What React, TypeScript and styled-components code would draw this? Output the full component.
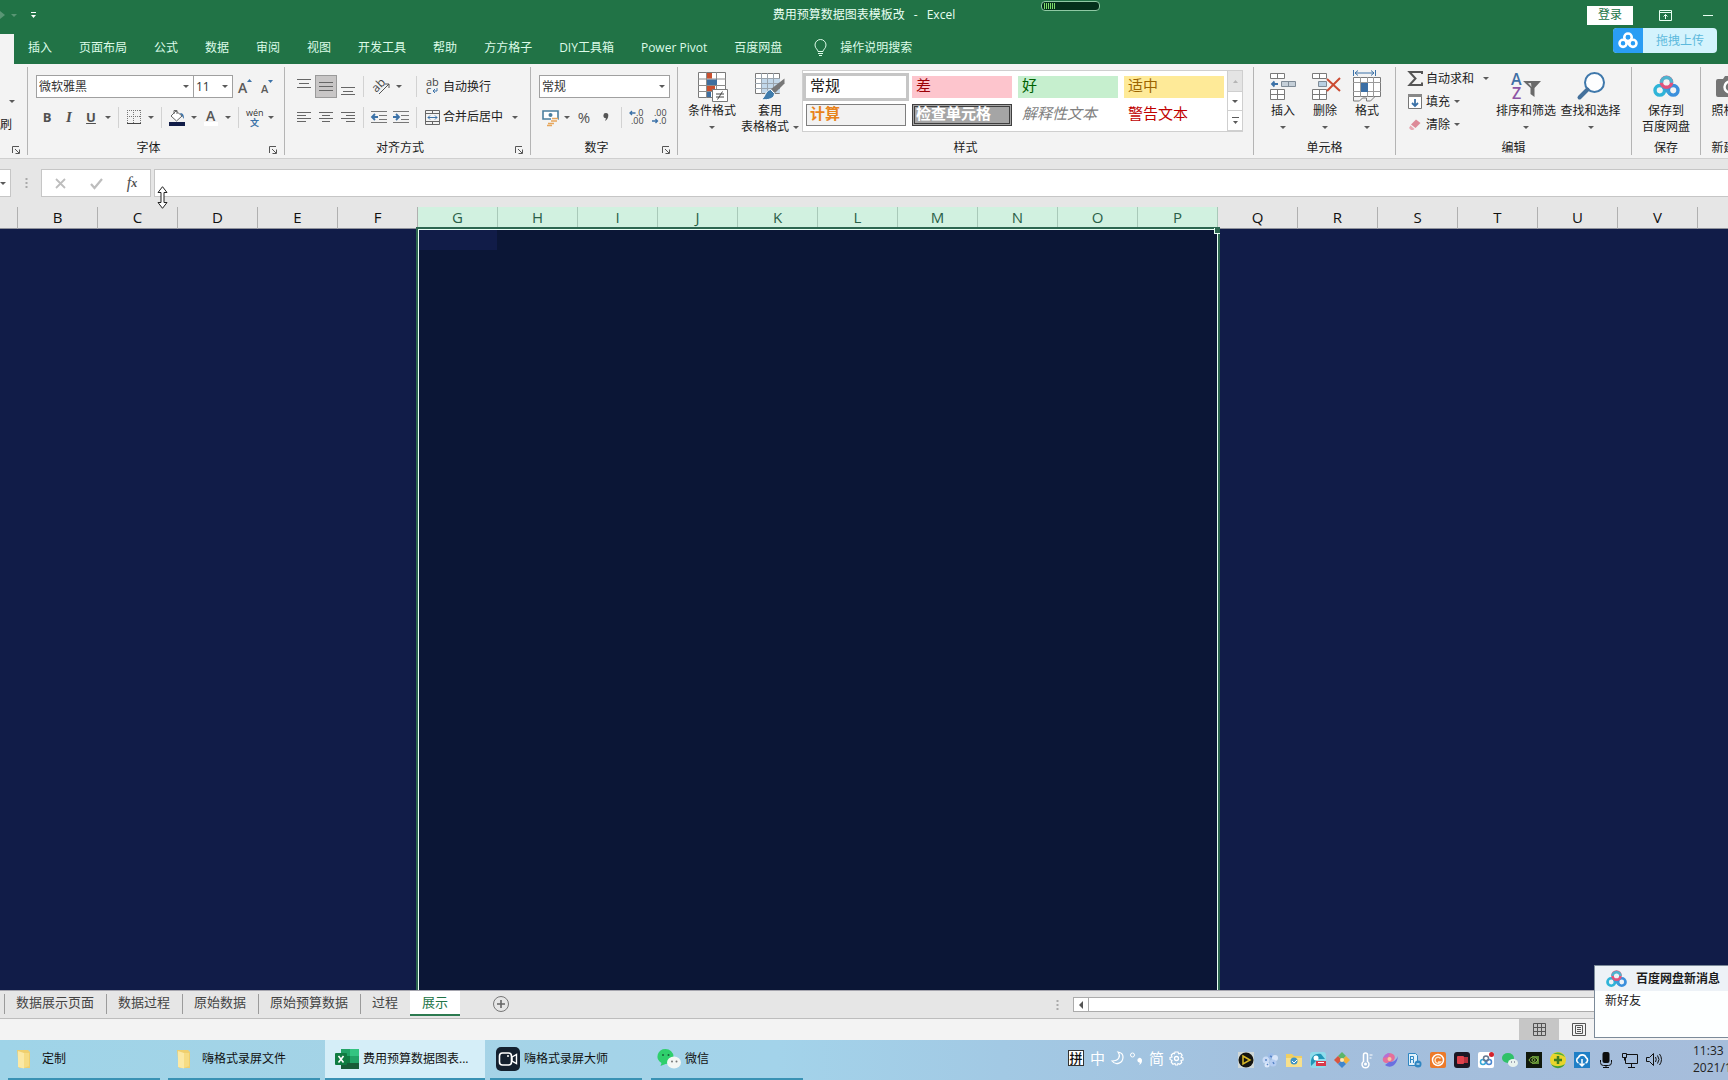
import React from "react";
import styled, { createGlobalStyle, css } from "styled-components";

const Global = createGlobalStyle`
  * { box-sizing: border-box; }
  html, body, #root { height: 100%; }
  body { margin: 0; overflow: hidden; background: #e6e6e6; }
  body, button, input, select, table {
    font-family: "Open Sans", "Noto Sans CJK SC", sans-serif;
    font-size: 12px;
    line-height: 16px;
    color: #1c1c1c;
  }
  button { border: 0; padding: 0; background: none; white-space: nowrap; }
  svg { display: block; flex: none; overflow: visible; }
`;

const Window = styled.div`
  height: 100vh;
  display: flex;
  flex-direction: column;
  overflow: hidden;
  position: relative;
`;

/* ---------- title bar ---------- */

const TitleBar = styled.header`
  flex: none;
  height: 34px;
  background: #217346;
  display: grid;
  grid-template-columns: 1fr auto 1fr;
  padding-bottom: 4px;
`;
const QuickAccess = styled.div`
  display: flex;
  align-items: center;
  gap: 6px;
`;
const QuickButton = styled.button<{ $dim?: boolean }>`
  display: flex;
  opacity: ${(p) => (p.$dim ? 0.25 : 1)};
`;
const Title = styled.h1`
  margin: 0;
  align-self: center;
  display: flex;
  gap: 9px;
  font-size: 12px;
  line-height: 16px;
  font-weight: 400;
  color: #e8fff2;
`;
const WindowButtons = styled.div`
  display: flex;
  justify-content: flex-end;
  align-items: center;
`;
const SignIn = styled.button`
  width: 46px;
  height: 19px;
  margin-right: 9px;
  background: #fff;
  color: #217346;
`;
const WindowButton = styled.button<{ $w: number }>`
  width: ${(p) => p.$w}px;
  height: 30px;
  display: flex;
  align-items: center;
  justify-content: center;
`;
const Battery = styled.div`
  position: absolute;
  top: 1px;
  left: 1041px;
  width: 59px;
  height: 10px;
  border: 1px solid #8fc9a4;
  border-radius: 4px;
  background: #04301b;
  padding: 1px 2px;
  display: flex;
  gap: 1px;
`;
const Bar = styled.i`
  width: 1px;
  background: #7ddc6a;
`;
const UploadPill = styled.button`
  position: absolute;
  top: 28px;
  right: 11px;
  width: 104px;
  height: 25px;
  display: flex;
  border-radius: 4px;
  overflow: hidden;
  background: #d3f3fd;
`;
const PillIcon = styled.span`
  width: 30px;
  height: 25px;
  background: #2a9df4;
  display: flex;
  align-items: center;
  justify-content: center;
`;
const PillText = styled.span`
  flex: 1;
  line-height: 25px;
  color: #5db9dc;
`;

/* ---------- ribbon tabs ---------- */

const Tabs = styled.nav`
  flex: none;
  height: 30px;
  background: #217346;
  display: flex;
  gap: 27px;
  overflow: hidden;
`;
const ActiveTab = styled.div`
  width: 14px;
  margin-right: -13px;
  background: #f3f3f3;
`;
const Tab = styled.button`
  flex: none;
  padding-bottom: 3px;
  color: #dcfbe8;
`;
const Search = styled.button`
  flex: none;
  display: flex;
  align-items: center;
  gap: 13px;
  padding: 0 0 3px 5px;
  color: #dcfbe8;
`;

/* ---------- ribbon ---------- */

const Ribbon = styled.section`
  flex: none;
  height: 95px;
  display: flex;
  overflow: hidden;
  background: #f3f3f3;
  border-bottom: 1px solid #cfcfcf;
`;
const GroupBox = styled.div<{ $w: number }>`
  flex: none;
  width: ${(p) => p.$w}px;
  display: flex;
  flex-direction: column;
  position: relative;
  border-right: 1px solid #b4b4b4;
  border-image: linear-gradient(#f3f3f3 4px, #b4b4b4 4px, #b4b4b4 90px, #f3f3f3 90px) 1;
`;
const GroupBody = styled.div<{ $flush?: boolean }>`
  height: 71px;
  display: flex;
  padding-left: ${(p) => (p.$flush ? 0 : 8)}px;
`;
const GroupFoot = styled.div`
  height: 23px;
  display: flex;
`;
const GroupName = styled.div`
  flex: 1;
  text-align: center;
  line-height: 25px;
  white-space: nowrap;
`;
const LauncherButton = styled.button`
  width: 15px;
  display: flex;
  align-items: center;
  padding-top: 6px;
`;
const Rows = styled.div`
  padding-top: 7px;
`;
const Row = styled.div`
  height: 31px;
  display: flex;
  align-items: center;
  & + & {
    height: 30px;
  }
`;
const Tool = styled.button<{ $w?: number; $on?: boolean }>`
  flex: none;
  width: ${(p) => p.$w ?? 22}px;
  height: 23px;
  display: flex;
  align-items: center;
  justify-content: center;
  gap: 5px;
  color: #444;
  ${(p) =>
    p.$on &&
    css`
      background: #c8c6c6;
      border: 1px solid #9a9a9a;
    `}
`;
const Glyph = styled.span<{ $b?: boolean; $i?: boolean; $u?: boolean; $s?: number }>`
  font-size: ${(p) => p.$s ?? 13}px;
  line-height: 16px;
  font-weight: ${(p) => (p.$b ? 700 : 400)};
  font-style: ${(p) => (p.$i ? "italic" : "normal")};
  font-family: ${(p) => (p.$i ? '"Liberation Serif", serif' : "inherit")};
  text-decoration: ${(p) => (p.$u ? "underline" : "none")};
  color: #505050;
`;
const Rule = styled.span`
  flex: none;
  width: 1px;
  height: 21px;
  margin: 0 4px;
  background: #d2d2d2;
`;
const Combo = styled.label<{ $w: number }>`
  flex: none;
  width: ${(p) => p.$w}px;
  height: 23px;
  display: flex;
  align-items: center;
  padding: 0 4px 0 2px;
  border: 1px solid #a0a0a0;
  background: #fff;
  & + & {
    margin-left: -1px;
  }
  select {
    flex: 1;
    min-width: 0;
    appearance: none;
    border: 0;
    padding: 0;
    background: none;
    color: #333;
  }
`;
const TextTool = styled.button<{ $gap?: number }>`
  height: 23px;
  display: flex;
  align-items: center;
  & > svg {
    margin-left: ${(p) => p.$gap ?? 0}px;
  }
`;
const IconSlot = styled.span`
  width: 22px;
  display: flex;
  justify-content: center;
`;
const BigTool = styled.button<{ $w: number }>`
  flex: none;
  width: ${(p) => p.$w}px;
  padding-top: 5px;
  display: flex;
  flex-direction: column;
  align-items: center;
`;
const BigIcon = styled.span`
  height: 34px;
  display: flex;
  align-items: center;
`;
const BigLine = styled.span`
  height: 16px;
  display: flex;
  align-items: center;
  gap: 4px;
`;
const EditList = styled.div`
  width: 90px;
  padding-top: 3px;
`;

const kinds: Record<string, ReturnType<typeof css>> = {
  normal: css`
    background: #fff;
    outline: 3px solid #c6c6c6;
  `,
  bad: css`
    background: #fdc5cd;
    color: #9c0006;
  `,
  good: css`
    background: #c6efce;
    color: #006100;
  `,
  neutral: css`
    background: #feea98;
    color: #9c6500;
  `,
  calc: css`
    background: #f2f2f2;
    border: 1px solid #7f7f7f;
    padding-left: 3px;
    line-height: 16px;
    color: #e8831c;
    font-weight: 700;
  `,
  check: css`
    background: #a5a5a5;
    border: 3px double #3f3f3f;
    padding-left: 1px;
    line-height: 12px;
    color: #fff;
    font-weight: 700;
  `,
  note: css`
    color: #7f7f7f;
    font-style: italic;
  `,
  warn: css`
    color: #c00000;
  `,
};
const Gallery = styled.div`
  margin-top: 6px;
  height: 62px;
  width: 441px;
  display: flex;
  border: 1px solid #cfcfcf;
  background: #fff;
`;
const GalleryGrid = styled.div`
  flex: 1;
  display: grid;
  grid-template-columns: repeat(4, 100px);
  grid-auto-rows: 22px;
  gap: 6px;
  padding: 5px 0 0 3px;
`;
const StyleCell = styled.button<{ $kind: string }>`
  text-align: left;
  padding: 0 0 4px 4px;
  font-size: 15px;
  line-height: 18px;
  ${(p) => kinds[p.$kind]}
`;
const GalleryScroll = styled.div`
  width: 15px;
  display: grid;
  grid-template-rows: 21px 19px 20px;
  border-left: 1px solid #cfcfcf;
`;
const ScrollButton = styled.button<{ $off?: boolean }>`
  display: flex;
  align-items: center;
  justify-content: center;
  background: ${(p) => (p.$off ? "#e4e4e4" : "#fff")};
  border-bottom: 1px solid #cfcfcf;
`;
const ClipRow = styled.div<{ $end: number }>`
  width: 27px;
  height: 23px;
  padding-right: ${(p) => p.$end}px;
  display: flex;
  justify-content: flex-end;
  align-items: center;
  white-space: nowrap;
`;
const ClipColumn = styled.div`
  padding-top: 26px;
`;

/* ---------- formula bar ---------- */

const FormulaBar = styled.section`
  flex: none;
  height: 48px;
  display: flex;
  padding: 10px 0 10px;
  background: #e6e6e6;
`;
const NameBox = styled.button`
  width: 11px;
  border: 1px solid #c6c6c6;
  border-left: 0;
  background: #fff;
  display: flex;
  align-items: center;
`;
const DotsSlot = styled.span`
  width: 30px;
  display: flex;
  align-items: center;
  justify-content: center;
`;
const FormulaTools = styled.div`
  width: 110px;
  margin-right: 3px;
  border: 1px solid #c6c6c6;
  background: #fff;
  display: flex;
`;
const FormulaButton = styled.button`
  flex: 1;
  display: flex;
  align-items: center;
  justify-content: center;
`;
const FormulaInput = styled.input`
  flex: 1;
  min-width: 0;
  border: 1px solid #c6c6c6;
  border-right: 0;
  background: #fff;
  padding: 0 6px;
`;
const ResizeCursor = styled.span`
  position: absolute;
  left: 156px;
  top: 186px;
`;

/* ---------- sheet ---------- */

const Sheet = styled.main`
  flex: 1;
  min-height: 0;
  overflow: hidden;
  background: #111c48;
`;
const Grid = styled.table`
  table-layout: fixed;
  width: 1778px;
  height: 100%;
  border-collapse: separate;
  border-spacing: 0;
`;
const ColHead = styled.th<{ $sel: boolean }>`
  height: 22px;
  padding: 0 0 2px;
  font-size: 15px;
  line-height: 18px;
  font-weight: 400;
  color: ${(p) => (p.$sel ? "#2a5f48" : "#111")};
  background: ${(p) => (p.$sel ? "#d1f1e0" : "#e6e6e6")};
  border-right: 1px solid ${(p) => (p.$sel ? "#a9c9b9" : "#b0b0b0")};
  border-bottom: 1px solid #8f929c;
`;
const Plain = styled.td`
  padding: 0;
`;
const Selected = styled.td`
  position: relative;
  padding: 0;
  vertical-align: top;
  background: #0b1636;
  border: 1px solid #e9fff4;
  border-bottom: 0;
  box-shadow: 0 0 0 2px #2c6650;
`;
const ActiveCell = styled.div`
  width: 78px;
  height: 20px;
  background: #111c48;
`;
const Handle = styled.i`
  position: absolute;
  top: -2px;
  right: -3px;
  width: 6px;
  height: 6px;
  background: #2c6650;
  border-left: 1px solid #e9fff4;
  border-bottom: 1px solid #e9fff4;
`;

/* ---------- sheet tabs and status ---------- */

const SheetBar = styled.nav`
  flex: none;
  height: 29px;
  display: flex;
  padding-left: 4px;
  background: #e6e6e6;
  border-top: 1px solid #a5a5ae;
  border-bottom: 1px solid #bdbdbd;
`;
const SheetTab = styled.button<{ $on?: boolean }>`
  flex: none;
  height: 25px;
  padding: 0 12px 4px;
  font-size: 13px;
  line-height: 18px;
  color: #444;
  background: linear-gradient(#9b9b9b, #9b9b9b) 0 3px / 1px 20px no-repeat;
  ${(p) =>
    p.$on &&
    css`
      color: #217346;
      background: #fff;
      border-bottom: 2px solid #2c7a50;
      padding-bottom: 2px;
    `}
`;
const AddSheet = styled.button`
  width: 20px;
  height: 26px;
  margin-left: 31px;
  display: flex;
  align-items: center;
  justify-content: center;
`;
const Spring = styled.span`
  flex: 1;
`;
const ScrollTrack = styled.div`
  flex: none;
  width: 38%;
  height: 15px;
  margin-top: 6px;
  border: 1px solid #ababab;
  border-right: 0;
  background: #fff;
  display: flex;
`;
const ScrollArrow = styled.button`
  width: 15px;
  border-right: 1px solid #ababab;
  display: flex;
  align-items: center;
  justify-content: center;
`;
const StatusBar = styled.footer`
  flex: none;
  height: 21px;
  display: flex;
  justify-content: flex-end;
  padding-right: 129px;
  background: #f3f3f3;
`;
const ViewButton = styled.button<{ $on?: boolean }>`
  width: 40px;
  display: flex;
  align-items: center;
  justify-content: center;
  background: ${(p) => (p.$on ? "#c6c6c6" : "transparent")};
`;

/* ---------- taskbar ---------- */

const Taskbar = styled.footer`
  flex: none;
  height: 40px;
  display: flex;
  padding-left: 8px;
  background: linear-gradient(90deg, #9fd4e8 0%, #a5d3e6 25%, #a3d3ea 45%, #a2c9e4 58%, #a3bfdd 75%, #a6bddb 100%);
`;
const Task = styled.button<{ $w: number; $gap: number; $pad: number; $on?: boolean }>`
  flex: none;
  width: ${(p) => p.$w}px;
  margin-right: ${(p) => p.$gap}px;
  padding-left: ${(p) => p.$pad}px;
  display: flex;
  align-items: center;
  gap: 4px;
  color: #111;
  border-bottom: 2px solid #3a92b4;
  background: ${(p) => (p.$on ? "#d5eef8" : "transparent")};
`;
const FolderSlot = styled.span`
  width: 22px;
`;
const Ime = styled.div`
  display: flex;
  align-items: center;
  gap: 5px;
  padding-bottom: 4px;
  margin-right: 50px;
  color: #fff;
  font-size: 15px;
`;
const ImeBadge = styled.b`
  width: 16px;
  height: 16px;
  margin-right: 1px;
  border: 1px solid #333;
  background: #fff;
  color: #111;
  font-size: 13px;
  line-height: 14px;
  text-align: center;
  font-weight: 500;
`;
const Tray = styled.div`
  display: flex;
  align-items: center;
  margin-right: 27px;
`;
const TrayButton = styled.button`
  width: 24px;
  height: 24px;
  display: flex;
  align-items: center;
  justify-content: center;
`;
const Clock = styled.div`
  flex: none;
  width: 35px;
  overflow: hidden;
  font-size: 12px;
  line-height: 17px;
  padding-top: 2px;
  white-space: nowrap;
  color: #222;
`;

const Popup = styled.aside`
  position: absolute;
  right: 0;
  bottom: 42px;
  width: 134px;
  height: 73px;
  border: 1px solid #7b8a99;
  border-right: 0;
  background: #fdffff;
`;
const PopupHead = styled.div`
  height: 25px;
  display: flex;
  align-items: center;
  gap: 9px;
  padding-left: 11px;
  background: #edf2f7;
  font-weight: 700;
  white-space: nowrap;
`;
const PopupText = styled.p`
  margin: 0;
  padding: 2px 10px;
`;

/* ---------- icons ---------- */

const Svg = ({ w, h, children, vb }: { w: number; h: number; vb?: string; children: React.ReactNode }) => (
  <svg width={w} height={h} viewBox={vb ?? `0 0 ${w} ${h}`} fill="none" aria-hidden="true">
    {children}
  </svg>
);
const Caret = ({ c = "#5a5a5a" }: { c?: string }) => (
  <Svg w={6} h={3}>
    <path d="M0 0h6L3 3z" fill={c} />
  </Svg>
);
const Lines = ({ rows }: { rows: [number, number, number][] }) => (
  <Svg w={14} h={16}>
    {rows.map(([y, a, b]) => (
      <path key={y} d={`M${a} ${y}.5H${b}`} stroke="#666" />
    ))}
  </Svg>
);
const Indent = ({ out }: { out?: boolean }) => (
  <Svg w={16} h={14}>
    <path d="M0 1.500h16M8 5.500h8M8 9.500h8M0 12.500h16" stroke="#777" />
    {out ? <path d="M7 7H1.500M4 4L1 7l3 3" stroke="#3c72a8" strokeWidth="1.800" /> : <path d="M0 7h5.500M3 4l3 3-3 3" stroke="#3c72a8" strokeWidth="1.800" />}
  </Svg>
);
const Dots = () => (
  <Svg w={3} h={12}>
    <path d="M.5 1h2v2h-2zM.5 5h2v2h-2zM.5 9h2v2h-2z" fill="#a9a9a9" />
  </Svg>
);
const GrowFont = ({ small }: { small?: boolean }) => (
  <svg width="16" height="18" viewBox="0 0 16 18" aria-hidden="true">
    <text x={small ? 3 : 2} y="15" fontSize={small ? 11 : 14} fontWeight="600" fill="#5a5a5a">A</text>
    <path d={small ? "M10 2h5l-2.500 3z" : "M11 4h5l-2.500-3z"} fill="#3c72a8" />
  </svg>
);
const Cloud = ({ s, mono }: { s: number; mono?: boolean }) => (
  <svg width={s} height={Math.round(s * 0.86)} viewBox="0 0 28 24" fill="none" aria-hidden="true">
    <circle cx="7" cy="16" r="5" stroke={mono ? "#fff" : "#2fb4d8"} strokeWidth="3.600" />
    <circle cx="21" cy="16" r="5" stroke={mono ? "#fff" : "#3b8fdc"} strokeWidth="3.600" />
    <path d="M10.500 12.500L17.500 19.500" stroke={mono ? "#fff" : "#3aa0d8"} strokeWidth="3.400" />
    <circle cx="14" cy="7.500" r="5.300" stroke={mono ? "#fff" : "#e2537c"} strokeWidth="3.600" />
    {!mono && <path d="M8.700 8a5.300 5.300 0 0 1 10.600 0" stroke="#4fb3cf" strokeWidth="3.600" />}
  </svg>
);
const Decimal = ({ more }: { more?: boolean }) => (
  <svg width="16" height="16" viewBox="0 0 16 16" fill="none" aria-hidden="true">
    <text x={more ? 7 : 3} y="7" fontSize="9" fill="#444">{more ? ".0" : ".00"}</text>
    <text x={more ? 2 : 8} y="15" fontSize="9" fill="#444">{more ? ".00" : ".0"}</text>
    {more ? <path d="M6.500 4H1M3 2L1 4l2 2" stroke="#3c72a8" strokeWidth="1.300" /> : <path d="M1 12h5.500M4.500 10l2 2-2 2" stroke="#3c72a8" strokeWidth="1.300" />}
  </svg>
);
const Launcher = () => (
  <Svg w={8} h={8}>
    <path d="M.5 7V.5H7M3 3l4 4M7.500 3.500v4h-4" stroke="#555" />
  </Svg>
);
const CondIcon = () => (
  <Svg w={31} h={31}>
    <path d="M1.500 1.500h27v25h-27z" fill="#fff" stroke="#7a7a7a" />
    <path d="M1 8h28M1 14.500h28M1 20.500h28M9.500 1v26M19.500 1v26" stroke="#8c8c8c" />
    <path d="M10 2h5v5.500h-5zM10 15h8v5h-8z" fill="#c9502f" />
    <path d="M10 8.500h10v5.500H10zM10 21h4v5h-4z" fill="#3f6f9f" />
    <path d="M15.500 18.500h15v12h-15z" fill="#fff" stroke="#7a7a7a" />
    <path d="M19 23h8M19 26h8M25.500 20.500l-5 8" stroke="#444" />
  </Svg>
);
const TableIcon = () => (
  <Svg w={30} h={30}>
    <path d="M.5 2.500h24v20H.5z" fill="#fff" stroke="#7a7a7a" />
    <path d="M7 8h18v14H7z" fill="#c2d8ea" />
    <path d="M0 7.500h25M0 12.500h25M0 17.500h25M6.500 2v21M12.500 2v21M18.500 2v21" stroke="#9aa4ad" />
    <path d="M29.500 7.500v5L20 22l-4-4z" fill="#777" />
    <path d="M15.500 18.500l4 4c0 5-6 7-13.500 6 4-1 4-9 9.500-10z" fill="#3f7cac" stroke="#fff" />
  </Svg>
);
const CellsIcon = ({ del }: { del?: boolean }) => (
  <Svg w={30} h={30}>
    <path d="M2.500 2.500h14v5h-14zM9.500 2.500v5M2.500 18.500h14v10h-14zM9.500 18.500v10M2.500 23.500h14" fill="#fff" stroke="#7a7a7a" />
    {del ? (
      <>
        <path d="M8.500 10.500h8v5h-8z" fill="#b9cfe2" stroke="#7f8b96" />
        <path d="M17 8l13 12M30 7L17 20" stroke="#cc4b32" strokeWidth="2" />
      </>
    ) : (
      <>
        <path d="M13.500 10.500h14v5h-14zM20.500 10.500v5" fill="#c5cfd8" stroke="#7f8b96" />
        <path d="M10 13H4M6.500 10.500L4 13l2.500 2.500" stroke="#3c72a8" strokeWidth="1.800" />
      </>
    )}
  </Svg>
);
const FormatIcon = () => (
  <Svg w={30} h={32}>
    <path d="M1.500 0v6M23.500 0v6M3 3h19M6 .5L3 3l3 2.500M19 .5L22 3l-3 2.500" stroke="#3c72a8" />
    <path d="M1.500 7.500h27v19h-27z" fill="#fff" stroke="#7a7a7a" />
    <path d="M1 12.500h28M1 21.500h28M8.500 7v20M15.500 7v20M21.500 7v20" stroke="#9a9a9a" />
    <path d="M9 13h7v9H9z" fill="#3c6fa5" />
    <path d="M1.500 27v4h6l3-3h4v3h4l4-4" stroke="#7a7a7a" />
  </Svg>
);
const SortIcon = () => (
  <svg width="30" height="30" viewBox="0 0 30 30" aria-hidden="true">
    <text x="0" y="14" fontSize="16" fontWeight="600" fill="#3f6fa5">A</text>
    <text x="1" y="28" fontSize="16" fontWeight="600" fill="#8d55a5">Z</text>
    <path d="M12 10h18l-6.500 7v9l-4-3v-6z" fill="#6a6a6a" />
    <path d="M20 12h-3l3.500 4z" fill="#ddd" />
  </svg>
);
const FindIcon = () => (
  <Svg w={30} h={30}>
    <circle cx="18.500" cy="11.500" r="9.500" fill="#fdfeff" stroke="#3f78ab" strokeWidth="2" />
    <path d="M11.500 18.500L3.500 26.500" stroke="#44709b" strokeWidth="4" strokeLinecap="round" />
  </Svg>
);

const trayIcons: [string, React.ReactNode][] = [
  ["播放器", <><rect width="16" height="16" fill="#cfd8d8" /><circle cx="8" cy="8" r="7.500" fill="#151510" /><path d="M5 4l7 4-7 4z" stroke="#d8b927" strokeWidth="1.500" /></>],
  ["网络", <><circle cx="4" cy="8" r="3.500" fill="#c9dbf6" /><circle cx="9" cy="4" r="3" fill="#9dbce8" /><circle cx="13" cy="6" r="3" fill="#d8e5f9" /><circle cx="11" cy="11" r="3.500" fill="#b5cdf2" /><circle cx="5" cy="13" r="2.500" fill="#dce8fa" /><path d="M3 8h2M8 4l2 1M11 10l1 2M5 12l1 1" stroke="#5a86c8" strokeWidth="1.500" /></>],
  ["文件夹", <><path d="M0 2h6l2 2h8v11H0z" fill="#f0cf62" /><path d="M0 6h16v9H0z" fill="#f8e08c" /><circle cx="8" cy="9" r="3.500" fill="#3d93c6" /><path d="M6 9l2 2 3-3" stroke="#fff" /></>],
  ["助手", <><rect width="16" height="16" rx="3" fill="#8fdcec" /><path d="M1 14C0 5 4 1 11 2l4 5H8z" fill="#2196b8" /><circle cx="6" cy="6" r="2.500" fill="#fff" /><path d="M6 9h10v5H6z" fill="#d83a4a" /><path d="M8 10.500h6" stroke="#fff" /></>],
  ["安全", <><path d="M8 0l4 4-4 4-4-4z" fill="#5bb56a" /><path d="M12 4l4 4-4 4-4-4z" fill="#f0b03a" /><path d="M4 4l4 4-4 4-4-4z" fill="#d9553f" /><path d="M8 8l4 4-4 4-4-4z" fill="#3f86cf" /><circle cx="8" cy="8" r="2" fill="#ffe9b0" /></>],
  ["温度", <><path d="M5.500 9.500V3a2 2 0 0 1 4 0v6.500a3.500 3.500 0 1 1-4 0z" stroke="#fff" strokeWidth="1.500" /><circle cx="7.500" cy="12" r="1.500" fill="#fff" /><path d="M11.500 3h3M11.500 6h2" stroke="#fff" /></>],
  ["浏览器", <><path d="M1 6c2-5 8-6 11-3 2 3 0 6-3 7l-4 1C2 11 0 9 1 6z" fill="#e56f9a" /><path d="M3 13c5 4 12 1 13-9-2 5-5 6-9 6z" fill="#6a6fe0" /><path d="M1 6c1-3 4-5 7-5L6 5z" fill="#b46fd6" /><circle cx="7.500" cy="7" r="2" fill="#f6c9a0" /></>],
  ["蓝牙", <><path d="M2.500 1.500h7l2 2v10h-9z" fill="#dff0fb" stroke="#2f86c2" /><path d="M4.500 4v7M4.500 4.500h3v3h-3M7.500 8v3" stroke="#2f86c2" /><circle cx="12" cy="12" r="3.500" fill="#2f86c2" /><path d="M10.500 12h3" stroke="#fff" /></>],
  ["火绒", <><rect width="16" height="16" rx="2" fill="#ec7a2a" /><circle cx="8" cy="8" r="5.500" stroke="#fff" strokeWidth="1.500" /><path d="M10.500 6.500a3 3 0 1 0 0 3.500H8" stroke="#ffe2c0" strokeWidth="1.500" /></>],
  ["录屏", <><rect width="16" height="16" rx="3" fill="#1b1724" /><rect x="3" y="4" width="7" height="8" rx="1" fill="#e0414c" /><path d="M10 5h4v6h-4z" fill="#b9303d" /></>],
  ["百度网盘", <><rect width="16" height="16" rx="2" fill="#fff" /><circle cx="5" cy="10" r="2.500" stroke="#35a7d8" strokeWidth="1.500" /><circle cx="11" cy="10" r="2.500" stroke="#4a86d0" strokeWidth="1.500" /><circle cx="8" cy="6.500" r="2.500" stroke="#64768e" strokeWidth="1.500" /><circle cx="13.500" cy="2.500" r="2.500" fill="#d3222c" /></>],
  ["微信", <><ellipse cx="6" cy="6" rx="6" ry="5" fill="#2fc168" /><ellipse cx="11" cy="11" rx="5" ry="4" fill="#e9f3ee" /><path d="M9 10h1M12 10h1" stroke="#557" /></>],
  ["NVIDIA", <><rect width="16" height="16" fill="#10180c" /><path d="M6 4h7v8H6z" fill="#5d8a33" /><path d="M3 8c2-4 6-4 9 0-3 4-7 4-9 0z" fill="#10180c" stroke="#8cc04a" /><circle cx="7.500" cy="8" r="1.500" stroke="#8cc04a" /></>],
  ["安全卫士", <><circle cx="8" cy="8" r="8" fill="#e8d52c" /><path d="M1 12A8 8 0 0 0 15 12C10 15 5 15 1 12z" fill="#3f9c3c" /><path d="M3 2a8 8 0 0 1 12 3C11 2 7 2 3 2z" fill="#4fae3f" /><path d="M8 4v8M4 8h8" stroke="#3c7d22" strokeWidth="2.500" /></>],
  ["云同步", <><rect width="16" height="16" fill="#1f7fc6" /><path d="M4.500 11a3 3 0 0 1 0-5.500 4 4 0 0 1 7.500 0 3 3 0 0 1-.5 5.500" stroke="#fff" strokeWidth="1.600" /><path d="M8 7v7M5.500 11.500L8 14l2.500-2.500" stroke="#fff" strokeWidth="1.500" /></>],
  ["麦克风", <><rect x="4.500" y="0" width="7" height="11" rx="2" fill="#0d0d0d" /><path d="M2.500 8v2.500a3 3 0 0 0 3 3h5a3 3 0 0 0 3-3V8M8 13v3M5 15.500h6" stroke="#0d0d0d" /></>],
  ["网络连接", <><path d="M4.500 2.500h11v9h-12V6M9.500 12v3M6 15.500h7M.5 1.500h4v4h-4zM2.500 6v2.500" stroke="#111" /></>],
  ["音量", <><path d="M.5 5.500h3l4-4v12l-4-4h-3z" stroke="#111" /><path d="M9.500 5q1.500 2.500 0 5M11.500 3.500q3 4 0 8M13.500 2q4 5.500 0 11" stroke="#111" /></>],
];

/* ---------- parts ---------- */

const Group = ({ w, name, launcher, flush, children }: { w: number; name: string; launcher?: boolean; flush?: boolean; children: React.ReactNode }) => (
  <GroupBox $w={w}>
    <GroupBody $flush={flush}>{children}</GroupBody>
    <GroupFoot>
      <GroupName>{name}</GroupName>
      {launcher && (
        <LauncherButton aria-label={`${name}设置`}>
          <Launcher />
        </LauncherButton>
      )}
    </GroupFoot>
  </GroupBox>
);

const Drop = () => (
  <Tool $w={12} aria-label="更多">
    <Caret />
  </Tool>
);

const Big = ({ w, icon, label, second, caret }: { w: number; icon: React.ReactNode; label: string; second?: string; caret?: boolean }) => (
  <BigTool $w={w}>
    <BigIcon>{icon}</BigIcon>
    <BigLine>{label}</BigLine>
    <BigLine>
      {second}
      {caret && <Caret />}
    </BigLine>
  </BigTool>
);

const tabs = ["插入", "页面布局", "公式", "数据", "审阅", "视图", "开发工具", "帮助", "方方格子", "DIY工具箱", "Power Pivot", "百度网盘"];
const styleCells: [string, string][] = [
  ["常规", "normal"],
  ["差", "bad"],
  ["好", "good"],
  ["适中", "neutral"],
  ["计算", "calc"],
  ["检查单元格", "check"],
  ["解释性文本", "note"],
  ["警告文本", "warn"],
];
const columns = "BCDEFGHIJKLMNOPQRSTUVW".split("");
const sheets = ["数据展示页面", "数据过程", "原始数据", "原始预算数据", "过程", "展示"];

const Folder = () => (
  <FolderSlot>
    <Svg w={16} h={20}>
      <path d="M1 1h11l2 2v16H3z" fill="#efcf6e" />
      <path d="M2 2l6 2v15.500L2 18z" fill="#fbe9a5" />
      <path d="M8 4h5v13l-5 2z" fill="#f6dc84" />
    </Svg>
  </FolderSlot>
);

export default function App() {
  return (
    <Window>
      <Global />
      <TitleBar>
        <QuickAccess>
          <QuickButton $dim aria-label="恢复">
            <Svg w={5} h={10}>
              <path d="M0 1l5 4-5 4z" fill="#fff" />
            </Svg>
          </QuickButton>
          <QuickButton $dim aria-label="恢复选项">
            <Caret c="#fff" />
          </QuickButton>
          <QuickButton aria-label="自定义快速访问工具栏">
            <Svg w={20} h={8}>
              <path d="M8 1.500h5" stroke="#fff" />
              <path d="M8 4h5l-2.500 3z" fill="#fff" />
            </Svg>
          </QuickButton>
        </QuickAccess>
        <Title>
          <span>费用预算数据图表模板改</span>
          <span>-</span>
          <span>Excel</span>
        </Title>
        <WindowButtons>
          <SignIn>登录</SignIn>
          <WindowButton $w={46} aria-label="功能区显示选项">
            <Svg w={13} h={11}>
              <path d="M.5.5h12v10H.5zM.5 2.500h12M6.500 9V4.500M4.500 6.500l2-2 2 2" stroke="#e8fff2" />
            </Svg>
          </WindowButton>
          <WindowButton $w={40} aria-label="最小化">
            <Svg w={10} h={1}>
              <path d="M0 .5h10" stroke="#e8fff2" />
            </Svg>
          </WindowButton>
        </WindowButtons>
      </TitleBar>
      <Tabs>
        <ActiveTab />
        {tabs.map((t) => (
          <Tab key={t}>{t}</Tab>
        ))}
        <Search>
          <Svg w={13} h={17}>
            <path d="M4 12.500c0-2-3-3-3-6.500a5.500 5.500 0 0 1 11 0c0 3.500-3 4.500-3 6.500zM4 14.500h5M5 16.500h3" stroke="#dcfbe8" />
          </Svg>
          操作说明搜索
        </Search>
      </Tabs>

      <Ribbon>
        <Group w={28} name="" launcher flush>
          <ClipColumn>
            <ClipRow $end={12}>
              <Caret />
            </ClipRow>
            <ClipRow $end={15}>格式刷</ClipRow>
          </ClipColumn>
        </Group>

        <Group w={257} name="字体" launcher>
          <Rows>
            <Row>
              <Combo $w={158}>
                <select aria-label="字体">
                  <option>微软雅黑</option>
                </select>
                <Caret />
              </Combo>
              <Combo $w={40}>
                <select aria-label="字号">
                  <option>11</option>
                </select>
                <Caret />
              </Combo>
              <Tool aria-label="增大字号"><GrowFont /></Tool>
              <Tool aria-label="减小字号"><GrowFont small /></Tool>
            </Row>
            <Row>
              <Tool><Glyph $b>B</Glyph></Tool>
              <Tool><Glyph $b $i $s={15}>I</Glyph></Tool>
              <Tool><Glyph $b $u>U</Glyph></Tool>
              <Drop />
              <Rule />
              <Tool aria-label="边框">
                <Svg w={14} h={14}>
                  <path d="M0 .5h14M.5 0v13M13.500 0v13M6.500 0v13M0 6.500h14" stroke="#777" strokeDasharray="1 1" />
                  <path d="M0 13.500h14" stroke="#444" />
                </Svg>
              </Tool>
              <Drop />
              <Rule />
              <Tool aria-label="填充颜色">
                <Svg w={16} h={17}>
                  <path d="M7 2l6 5-5.500 5L2 7z" fill="#fff" stroke="#666" />
                  <path d="M5 5V1.500h3V5" stroke="#666" />
                  <path d="M11 4c3 0 4 2 4 6l-2-3z" fill="#3c72a8" />
                  <path d="M0 13h16v4H0z" fill="#111c48" />
                </Svg>
              </Tool>
              <Drop />
              <Tool aria-label="字体颜色">
                <Svg w={14} h={17}>
                  <path d="M0 13h14v4H0z" fill="#fff" />
                  <text x="2" y="12" fontSize="14" fontWeight="600" fill="#555">A</text>
                </Svg>
              </Tool>
              <Drop />
              <Rule />
              <Tool aria-label="拼音">
                <Svg w={18} h={19}>
                  <text x="1" y="8" fontSize="9" fill="#333">wén</text>
                  <text x="5" y="18" fontSize="9" fontWeight="700" fill="#3c72a8">文</text>
                </Svg>
              </Tool>
              <Drop />
            </Row>
          </Rows>
        </Group>

        <Group w={246} name="对齐方式" launcher>
          <Rows>
            <Row>
              <Tool aria-label="顶端对齐"><Lines rows={[[0, 0, 14], [4, 2, 12], [8, 0, 14]]} /></Tool>
              <Tool $on aria-label="垂直居中"><Lines rows={[[3, 0, 14], [7, 0, 14], [11, 0, 14]]} /></Tool>
              <Tool aria-label="底端对齐"><Lines rows={[[8, 0, 14], [12, 2, 12], [15, 0, 14]]} /></Tool>
              <Rule />
              <Tool $w={44} aria-label="方向">
                <Svg w={17} h={17}>
                  <text x="-2" y="11" fontSize="12" fill="#444" transform="rotate(-45 5 8)">ab</text>
                  <path d="M5 16L15 6M15 10V6h-4" stroke="#555" />
                </Svg>
                <Caret />
                <span />
              </Tool>
              <Rule />
              <TextTool>
                <IconSlot>
                  <Svg w={14} h={17}>
                    <text x="1" y="8" fontSize="11" fill="#444">ab</text>
                    <text x="1" y="16" fontSize="11" fill="#444">c</text>
                    <path d="M12 10v3H8M10 11l-2 2 2 2" stroke="#3c72a8" />
                  </Svg>
                </IconSlot>
                自动换行
              </TextTool>
            </Row>
            <Row>
              <Tool aria-label="左对齐"><Lines rows={[[3, 0, 14], [6, 0, 9], [9, 0, 14], [12, 0, 9]]} /></Tool>
              <Tool aria-label="居中"><Lines rows={[[3, 0, 14], [6, 3, 11], [9, 0, 14], [12, 3, 11]]} /></Tool>
              <Tool aria-label="右对齐"><Lines rows={[[3, 0, 14], [6, 5, 14], [9, 0, 14], [12, 5, 14]]} /></Tool>
              <Rule />
              <Tool aria-label="减少缩进量"><Indent out /></Tool>
              <Tool aria-label="增加缩进量"><Indent /></Tool>
              <Rule />
              <TextTool $gap={9}>
                <IconSlot>
                  <Svg w={15} h={15}>
                    <path d="M.5.5h14v14H.5zM.5 3.500h14M.5 11.500h14M7.500 0v3.500M7.500 11.500V15" stroke="#666" />
                    <path d="M3 7.500h9M5 5.500l-2 2 2 2M10 5.500l2 2-2 2" stroke="#3c72a8" />
                  </Svg>
                </IconSlot>
                合并后居中
                <Caret />
              </TextTool>
            </Row>
          </Rows>
        </Group>

        <Group w={147} name="数字" launcher>
          <Rows>
            <Row>
              <Combo $w={131}>
                <select aria-label="数字格式">
                  <option>常规</option>
                </select>
                <Caret />
              </Combo>
            </Row>
            <Row>
              <Tool aria-label="会计数字格式">
                <Svg w={17} h={17}>
                  <path d="M1 2h15v8H1z" fill="#fff" stroke="#4b7f9f" strokeWidth="1.600" />
                  <circle cx="8.500" cy="6" r="2" fill="#4b7f9f" />
                  <path d="M9 9h7v7H9z" fill="#f3f3f3" />
                  <path d="M10 9.500h6M9 12h6M6 14.500h6M5 16.500h5" stroke="#e7a75c" strokeWidth="1.500" />
                </Svg>
              </Tool>
              <Drop />
              <Tool><Glyph $s={15}>%</Glyph></Tool>
              <Tool aria-label="千位分隔样式">
                <Svg w={6} h={10}>
                  <path d="M3 1a2.300 2.300 0 0 1 2.300 2.500C5.300 6 4 8 2 9c.6-1.300.8-2 .8-3A2.500 2.500 0 1 1 3 1z" fill="#555" />
                </Svg>
              </Tool>
              <Rule />
              <Tool aria-label="增加小数位数"><Decimal more /></Tool>
              <Tool aria-label="减少小数位数"><Decimal /></Tool>
            </Row>
          </Rows>
        </Group>

        <Group w={576} name="样式">
          <Big w={52} icon={<CondIcon />} label="条件格式" caret />
          <Big w={64} icon={<TableIcon />} label="套用" second="表格格式" caret />
          <Gallery>
            <GalleryGrid>
              {styleCells.map(([t, k]) => (
                <StyleCell key={t} $kind={k}>
                  {t}
                </StyleCell>
              ))}
            </GalleryGrid>
            <GalleryScroll>
              <ScrollButton $off aria-label="上一行">
                <Svg w={5} h={3}>
                  <path d="M0 3h5L2.500 0z" fill="#b5b5b5" />
                </Svg>
              </ScrollButton>
              <ScrollButton aria-label="下一行"><Caret /></ScrollButton>
              <ScrollButton aria-label="其他样式">
                <Svg w={7} h={7}>
                  <path d="M0 .5h7" stroke="#5a5a5a" />
                  <path d="M1 4h5L3.500 7z" fill="#5a5a5a" />
                </Svg>
              </ScrollButton>
            </GalleryScroll>
          </Gallery>
        </Group>

        <Group w={142} name="单元格">
          <Big w={42} icon={<CellsIcon />} label="插入" caret />
          <Big w={42} icon={<CellsIcon del />} label="删除" caret />
          <Big w={42} icon={<FormatIcon />} label="格式" caret />
        </Group>

        <Group w={236} name="编辑">
          <EditList>
            <TextTool $gap={9}>
              <IconSlot>
                <Svg w={15} h={15}>
                  <path d="M14 3V1H1.500l6 6.500-6 6.500H14v-2.500" stroke="#555" strokeWidth="2" />
                </Svg>
              </IconSlot>
              自动求和
              <Caret />
            </TextTool>
            <TextTool $gap={4}>
              <IconSlot>
                <Svg w={14} h={15}>
                  <path d="M.5.5h13v14H.5z" fill="#fff" stroke="#777" />
                  <path d="M0 0h14v3H0z" fill="#888" />
                  <path d="M7 5v7M4 9l3 3 3-3" stroke="#3c72a8" strokeWidth="1.800" />
                </Svg>
              </IconSlot>
              填充
              <Caret />
            </TextTool>
            <TextTool $gap={4}>
              <IconSlot>
                <Svg w={14} h={13}>
                  <path d="M8 1.500L12.500 5l-5 5L3 6.500z" fill="#dd8a98" />
                  <path d="M2.500 7.500L6.500 11 5 12H3L1 10z" fill="#e9a9b3" />
                </Svg>
              </IconSlot>
              清除
              <Caret />
            </TextTool>
          </EditList>
          <Big w={64} icon={<SortIcon />} label="排序和筛选" caret />
          <Big w={65} icon={<FindIcon />} label="查找和选择" caret />
        </Group>

        <Group w={69} name="保存" flush>
          <Big w={68} icon={<Cloud s={27} />} label="保存到" second="百度网盘" />
        </Group>

        <Group w={58} name="新建组" flush>
          <Big
            w={57}
            icon={
              <Svg w={28} h={22}>
                <path d="M2 4h5l2-3h10l2 3h5a2 2 0 0 1 2 2v14a2 2 0 0 1-2 2H2a2 2 0 0 1-2-2V6a2 2 0 0 1 2-2z" fill="#757575" />
                <circle cx="14" cy="12" r="5.500" stroke="#fff" strokeWidth="2.500" />
              </Svg>
            }
            label="照相机"
          />
        </Group>
      </Ribbon>

      <FormulaBar>
        <NameBox aria-label="名称框">
          <Caret />
        </NameBox>
        <DotsSlot><Dots /></DotsSlot>
        <FormulaTools>
          <FormulaButton aria-label="取消">
            <Svg w={11} h={11}>
              <path d="M1 1l9 9M10 1l-9 9" stroke="#bdbdbd" strokeWidth="1.800" />
            </Svg>
          </FormulaButton>
          <FormulaButton aria-label="输入">
            <Svg w={13} h={11}>
              <path d="M1 6l3.500 4L12 1" stroke="#bdbdbd" strokeWidth="2.200" />
            </Svg>
          </FormulaButton>
          <FormulaButton aria-label="插入函数">
            <Glyph $i $s={16}>f</Glyph>
            <Glyph $i $b $s={12}>x</Glyph>
          </FormulaButton>
        </FormulaTools>
        <FormulaInput aria-label="编辑栏" />
      </FormulaBar>

      <Sheet>
        <Grid>
          <colgroup>
            <col style={{ width: 18 }} />
            {columns.map((c) => (
              <col key={c} style={{ width: 80 }} />
            ))}
          </colgroup>
          <thead>
            <tr>
              <ColHead $sel={false} />
              {columns.map((c) => (
                <ColHead key={c} $sel={c >= "G" && c <= "P"}>
                  {c}
                </ColHead>
              ))}
            </tr>
          </thead>
          <tbody>
            <tr>
              <Plain colSpan={6} />
              <Selected colSpan={10}>
                <ActiveCell />
                <Handle />
              </Selected>
              <Plain colSpan={7} />
            </tr>
          </tbody>
        </Grid>
      </Sheet>

      <SheetBar>
        {sheets.map((s) => (
          <SheetTab key={s} $on={s === "展示"}>
            {s}
          </SheetTab>
        ))}
        <AddSheet aria-label="新工作表">
          <Svg w={16} h={16}>
            <circle cx="8" cy="8" r="7.500" stroke="#777" />
            <path d="M8 4v8M4 8h8" stroke="#666" strokeWidth="1.600" />
          </Svg>
        </AddSheet>
        <Spring />
        <DotsSlot><Dots /></DotsSlot>
        <ScrollTrack>
          <ScrollArrow aria-label="向左滚动">
            <Svg w={4} h={8}>
              <path d="M4 0v8L0 4z" fill="#555" />
            </Svg>
          </ScrollArrow>
        </ScrollTrack>
      </SheetBar>
      <StatusBar>
        <ViewButton $on aria-label="普通">
          <Svg w={13} h={13}>
            <path d="M.5.5h12v12H.5zM.5 4.500h12M.5 8.500h12M4.500.5v12M8.500.5v12" stroke="#555" />
          </Svg>
        </ViewButton>
        <ViewButton aria-label="页面布局">
          <Svg w={14} h={13}>
            <path d="M.5.5h13v12H.5zM3.500 2.500h7v8h-7zM5 4.500h4M5 6.500h4M5 8.500h4" stroke="#555" />
          </Svg>
        </ViewButton>
      </StatusBar>

      <Taskbar>
        <Task $w={152} $gap={8} $pad={8}>
          <Folder />定制
        </Task>
        <Task $w={152} $gap={5} $pad={8}>
          <Folder />嗨格式录屏文件
        </Task>
        <Task $w={160} $gap={5} $pad={10} $on>
          <Svg w={24} h={22}>
            <path d="M6 1h18v20H6z" fill="#21a366" />
            <path d="M15 1h9v7h-9z" fill="#33c481" />
            <path d="M6 8h9v7H6z" fill="#107c41" />
            <path d="M6 15h18v6H6z" fill="#185c37" />
            <rect y="5" width="12" height="12" rx="1" fill="#107c41" />
            <path d="M3.500 8l5 6.500M8.500 8l-5 6.500" stroke="#fff" strokeWidth="1.600" />
          </Svg>
          费用预算数据图表...
        </Task>
        <Task $w={152} $gap={9} $pad={6}>
          <Svg w={24} h={24}>
            <rect width="24" height="24" rx="5" fill="#14202e" />
            <rect x="3.500" y="6" width="12" height="12" rx="3" stroke="#fff" strokeWidth="1.600" />
            <path d="M16 10l4.500-2.500v9L16 14z" stroke="#fff" strokeWidth="1.400" />
            <circle cx="12" cy="9" r="1" fill="#fff" />
          </Svg>
          嗨格式录屏大师
        </Task>
        <Task $w={152} $gap={0} $pad={6}>
          <Svg w={24} h={22}>
            <path d="M8.500 1a8 7.500 0 0 1 0 15l-5 2 1-3a8 7.500 0 0 1 4-14z" fill="#2fcf6c" />
            <circle cx="6" cy="7" r="1" fill="#17653a" />
            <circle cx="11.500" cy="7" r="1" fill="#17653a" />
            <ellipse cx="17" cy="14.500" rx="7" ry="6" fill="#f3f6f4" />
            <circle cx="15" cy="13.500" r="1" fill="#777" />
            <circle cx="19.500" cy="13.500" r="1" fill="#777" />
          </Svg>
          微信
        </Task>
        <Spring />
        <Ime>
          <ImeBadge>拼</ImeBadge>
          <span>中</span>
          <Svg w={14} h={14}>
            <path d="M8 1c3 4 1 9-6 9 4 5 11 2 11-4 0-3-2-4.500-5-5z" stroke="#fff" strokeWidth="1.200" />
          </Svg>
          <Svg w={15} h={14}>
            <circle cx="3.500" cy="4" r="2" stroke="#fff" />
            <path d="M10 7a2.300 2.300 0 0 1 3 2.500c0 2-1 3.500-3 4.500 1-1.500 1-2 .5-2.500A2.300 2.300 0 0 1 10 7z" fill="#fff" />
          </Svg>
          <span>简</span>
          <Svg w={15} h={15}>
            <circle cx="7.500" cy="7.500" r="2" stroke="#fff" strokeWidth="1.300" />
            <path d="M6 1h3l.6 1.800 2-.7 1.600 2.200L12 6l2 1v2l-2 .5.700 2-2 1.700L9 12.500 8.500 14h-2L6 12.500l-2 .7-1.800-2L3 9.500 1 8.500v-2L3 6l-.7-2 2-1.700 1.200.5z" stroke="#fff" strokeWidth="1.200" />
          </Svg>
        </Ime>
        <Tray>
          {trayIcons.map(([name, art]) => (
            <TrayButton key={name} aria-label={name}>
              <Svg w={16} h={16}>{art}</Svg>
            </TrayButton>
          ))}
        </Tray>
        <Clock>
          11:33
          <br />
          2021/12
        </Clock>
      </Taskbar>

      <Battery>
        {[0, 1, 2, 3, 4, 5].map((i) => (
          <Bar key={i} />
        ))}
      </Battery>
      <UploadPill>
        <PillIcon><Cloud s={20} mono /></PillIcon>
        <PillText>拖拽上传</PillText>
      </UploadPill>
      <ResizeCursor>
        <Svg w={13} h={23}>
          <path d="M6.500.7L11 6.500H8v10h3l-4.500 5.800L2 16.500h3v-10H2z" fill="#fff" stroke="#222" />
        </Svg>
      </ResizeCursor>
      <Popup>
        <PopupHead>
          <Cloud s={21} />
          百度网盘新消息
        </PopupHead>
        <PopupText>新好友</PopupText>
      </Popup>
    </Window>
  );
}
